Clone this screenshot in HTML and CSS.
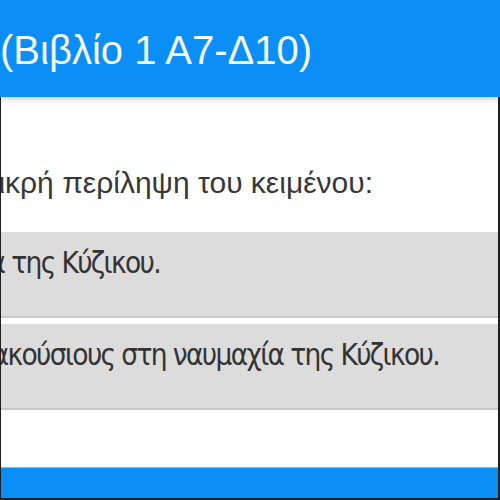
FILE: index.html
```html
<!DOCTYPE html>
<html lang="el">
<head>
<meta charset="utf-8">
<title>Βιβλίο 1</title>
<link rel="stylesheet" href="styles.css">
</head>
<body>
<div class="frame">
  <header class="topbar">
    <h1 class="title">(Βιβλίο 1 Α7-Δ10)</h1>
  </header>
  <main class="content">
    <div class="question"><span class="line-text">Επιλέξτε τη σωστή μικρή περίληψη του κειμένου:</span></div>
    <ul class="options">
      <li class="option option-first"><span class="line-text">Οι Αθηναίοι νίκησαν στη ναυμαχία της Κύζικου.</span></li>
      <li class="option option-second"><span class="line-text">Οι Αθηναίοι νίκησαν τους Συρακούσιους στη ναυμαχία της Κύζικου.</span></li>
    </ul>
  </main>
  <footer class="bottombar"></footer>
</div>
</body>
</html>
```

FILE: styles.css
```css
html, body {
  margin: 0;
  padding: 0;
  background: #ffffff;
}

.frame {
  position: relative;
  width: 500px;
  height: 500px;
  overflow: hidden;
  display: flex;
  flex-direction: column;
  background: #ffffff;
}

.frame::after {
  content: "";
  position: absolute;
  inset: 0;
  border-style: solid;
  border-color: #1e1e1e;
  border-width: 1px 2px 2px 1px;
  pointer-events: none;
}

.topbar {
  height: 97px;
  flex: 0 0 97px;
  background: #0b8ef6;
  box-shadow: 0 2px 6px rgba(0, 0, 0, 0.22);
  position: relative;
  z-index: 1;
  overflow: hidden;
}

.title {
  margin: 0;
  padding: 28px 0 0 0;
  font-family: "Liberation Sans", Arial, sans-serif;
  font-weight: normal;
  font-size: 40px;
  line-height: 45px;
  color: #f4f9ff;
  white-space: nowrap;
}

.content {
  flex: 1 1 auto;
  overflow: hidden;
}

.line-text {
  flex: 0 0 auto;
  white-space: nowrap;
}

.question {
  display: flex;
  justify-content: flex-end;
  overflow: hidden;
  margin: 68px 0 31px 0;
  padding-right: 127px;
  font-family: "Liberation Sans", Arial, sans-serif;
  font-size: 30px;
  line-height: 36px;
  color: #383838;
}

.options {
  list-style: none;
  margin: 0;
  padding: 0;
  display: flex;
  flex-direction: column;
  gap: 6px;
}

.option {
  display: flex;
  justify-content: flex-end;
  overflow: hidden;
  height: 73px;
  padding-top: 11px;
  background: #dcdcdc;
  border-bottom: 2px solid #c9c9c9;
  font-family: "DejaVu Sans Condensed", "DejaVu Sans", sans-serif;
  font-size: 29.5px;
  letter-spacing: -1.65px;
  line-height: 40px;
  color: #333333;
}

.option-first {
  padding-right: 340px;
}

.option-second {
  padding-right: 61px;
}

.bottombar {
  flex: 0 0 33px;
  height: 33px;
  background: #0b8ef6;
  border-top: 1px solid #6cc2fb;
  box-sizing: border-box;
}
```
